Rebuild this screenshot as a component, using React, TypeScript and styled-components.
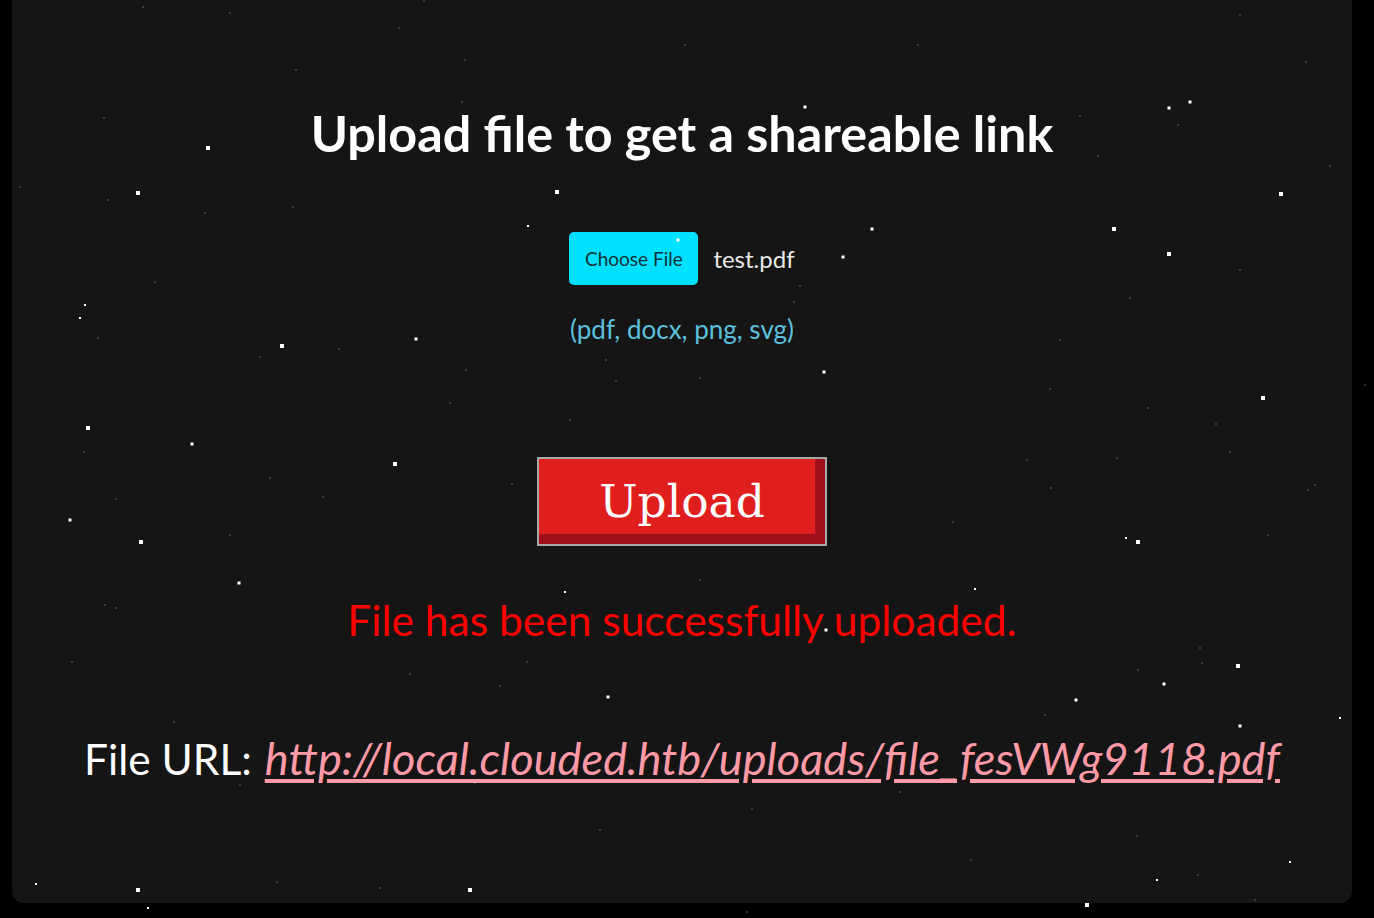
import styled, { createGlobalStyle } from "styled-components";

// [x, y, size]
const STARS: [number, number, number][] = [
  [208, 148, 4], [138, 193, 4], [557, 192, 4], [1281, 194, 4], [1114, 229, 4],
  [1169, 254, 4], [282, 346, 4], [416, 339, 3], [88, 428, 4], [192, 444, 3],
  [395, 464, 4], [1263, 398, 4], [141, 542, 4], [1138, 542, 4], [239, 583, 3],
  [1238, 666, 4], [608, 697, 3], [1076, 700, 3], [1240, 726, 3], [138, 890, 4],
  [470, 890, 4], [1087, 905, 4], [805, 107, 3], [1190, 102, 3], [1169, 108, 3],
  [872, 229, 3], [843, 257, 3], [528, 226, 2], [70, 520, 3], [824, 372, 3],
  [1164, 684, 3], [565, 592, 2], [975, 589, 2], [826, 630, 3], [678, 240, 3],
  [143, 7, 1], [104, 118, 1], [20, 187, 1], [85, 305, 2], [80, 318, 2],
  [98, 338, 1], [155, 282, 1], [260, 357, 1], [293, 207, 1], [339, 349, 1],
  [105, 605, 1], [116, 608, 1], [72, 662, 1], [174, 722, 1], [410, 674, 1],
  [500, 686, 1], [527, 662, 1], [752, 809, 1], [1137, 836, 1], [1198, 875, 1],
  [1290, 862, 2], [148, 908, 2], [36, 884, 2], [277, 882, 1], [380, 888, 1],
  [971, 860, 1], [1157, 880, 2], [1365, 385, 1], [1340, 718, 2], [1308, 490, 1],
  [1315, 485, 1], [1268, 535, 1], [1126, 538, 2], [1148, 408, 1], [1216, 424, 1],
  [1230, 452, 1], [1117, 458, 1], [1027, 460, 1], [1051, 488, 1], [953, 522, 1],
  [1060, 340, 1], [1130, 298, 1], [1050, 389, 1], [800, 286, 1], [794, 302, 1],
  [606, 360, 1], [616, 381, 1], [450, 403, 1], [512, 484, 1], [570, 420, 1],
  [270, 478, 1], [323, 497, 1], [116, 499, 1], [84, 452, 1], [230, 535, 1],
  [205, 213, 1], [108, 200, 1], [296, 70, 1], [424, 1, 1], [465, 60, 1],
  [399, 28, 1], [230, 13, 1], [685, 45, 1], [918, 45, 1], [1240, 15, 1],
  [1306, 62, 1], [1178, 125, 1], [1098, 156, 1], [1240, 270, 1], [1330, 166, 1],
  [462, 102, 1], [1080, 116, 1], [466, 370, 1], [700, 378, 1], [240, 785, 1],
  [475, 783, 1], [1200, 648, 1], [1138, 670, 1], [1202, 663, 1], [900, 792, 1],
  [1045, 715, 1], [700, 580, 1], [1255, 900, 1], [600, 830, 1], [747, 912, 1],
];

const App = () => {
  return (
    <>
      <GlobalStyle />
      <Page>
        <Panel>
          <Title>Upload file to get a shareable link</Title>
          <FileRow>
            <ChooseButton>Choose File</ChooseButton>
            <FileName>test.pdf</FileName>
          </FileRow>
          <Hint>(pdf, docx, png, svg)</Hint>
          <UploadButton>Upload</UploadButton>
          <Success>File has been successfully uploaded.</Success>
          <UrlLine>
            File URL:{" "}
            <UrlLink href="#">
              http://local.clouded.htb/uploads/file_fesVWg9118.pdf
            </UrlLink>
          </UrlLine>
        </Panel>
      </Page>
      <StarField width="1374" height="918" viewBox="0 0 1374 918">
        {STARS.map(([x, y, s], i) => (
          <rect
            key={i}
            x={x - s / 2}
            y={y - s / 2}
            width={s}
            height={s}
            fill="#fff"
            opacity={s > 1 ? 1 : 0.7}
          />
        ))}
      </StarField>
    </>
  );
};

const GlobalStyle = createGlobalStyle`
  html, body {
    margin: 0;
    background: #000;
    overflow: hidden;
  }
  body {
    font-family: Lato, "Liberation Sans", sans-serif;
  }
`;

const Page = styled.div`
  width: 1374px;
  height: 918px;
  padding: 0 22px 0 12px;
  box-sizing: border-box;
  display: flex;
  flex-direction: column;
`;

const Panel = styled.div`
  margin-top: -20px;
  height: 923px;
  flex-shrink: 0;
  background: #151515;
  border-radius: 12px;
  display: flex;
  flex-direction: column;
  align-items: center;
  padding-top: 128px;
  box-sizing: border-box;
`;

const Title = styled.h1`
  margin: 0;
  font-size: 50.3px;
  font-weight: 700;
  color: #fff;
  line-height: 1;
`;

const FileRow = styled.div`
  display: flex;
  align-items: center;
  gap: 15px;
  margin-top: 74px;
`;

const ChooseButton = styled.div`
  width: 129px;
  height: 53px;
  background: #00e0ff;
  border-radius: 5px;
  display: flex;
  align-items: center;
  justify-content: center;
  font-size: 19px;
  color: #123238;
`;

const FileName = styled.span`
  font-size: 24px;
  color: #e8e8e8;
`;

const Hint = styled.div`
  margin-top: 28px;
  font-size: 26px;
  color: #5bc0de;
`;

const UploadButton = styled.button`
  margin-top: 112px;
  width: 290px;
  height: 89px;
  border: 2px solid #a8a8a8;
  background: #e01e1e;
  box-shadow: inset -10px -10px 0 #a00f1e;
  padding: 0;
  font-family: "DejaVu Serif", serif;
  font-size: 45.5px;
  color: #fff;
`;

const Success = styled.div`
  margin-top: 48px;
  font-size: 42.5px;
  color: #ff0000;
`;

const UrlLine = styled.div`
  margin-top: 85px;
  font-size: 42.5px;
  color: #fff;
`;

const UrlLink = styled.a`
  font-size: 45.2px;
  margin-left: 2px;
  color: #ff9aa6;
  font-style: italic;
  text-decoration: underline;
  text-underline-offset: 4px;
`;

const StarField = styled.svg`
  position: fixed;
  top: 0;
  left: 0;
  pointer-events: none;
`;

export default App;
